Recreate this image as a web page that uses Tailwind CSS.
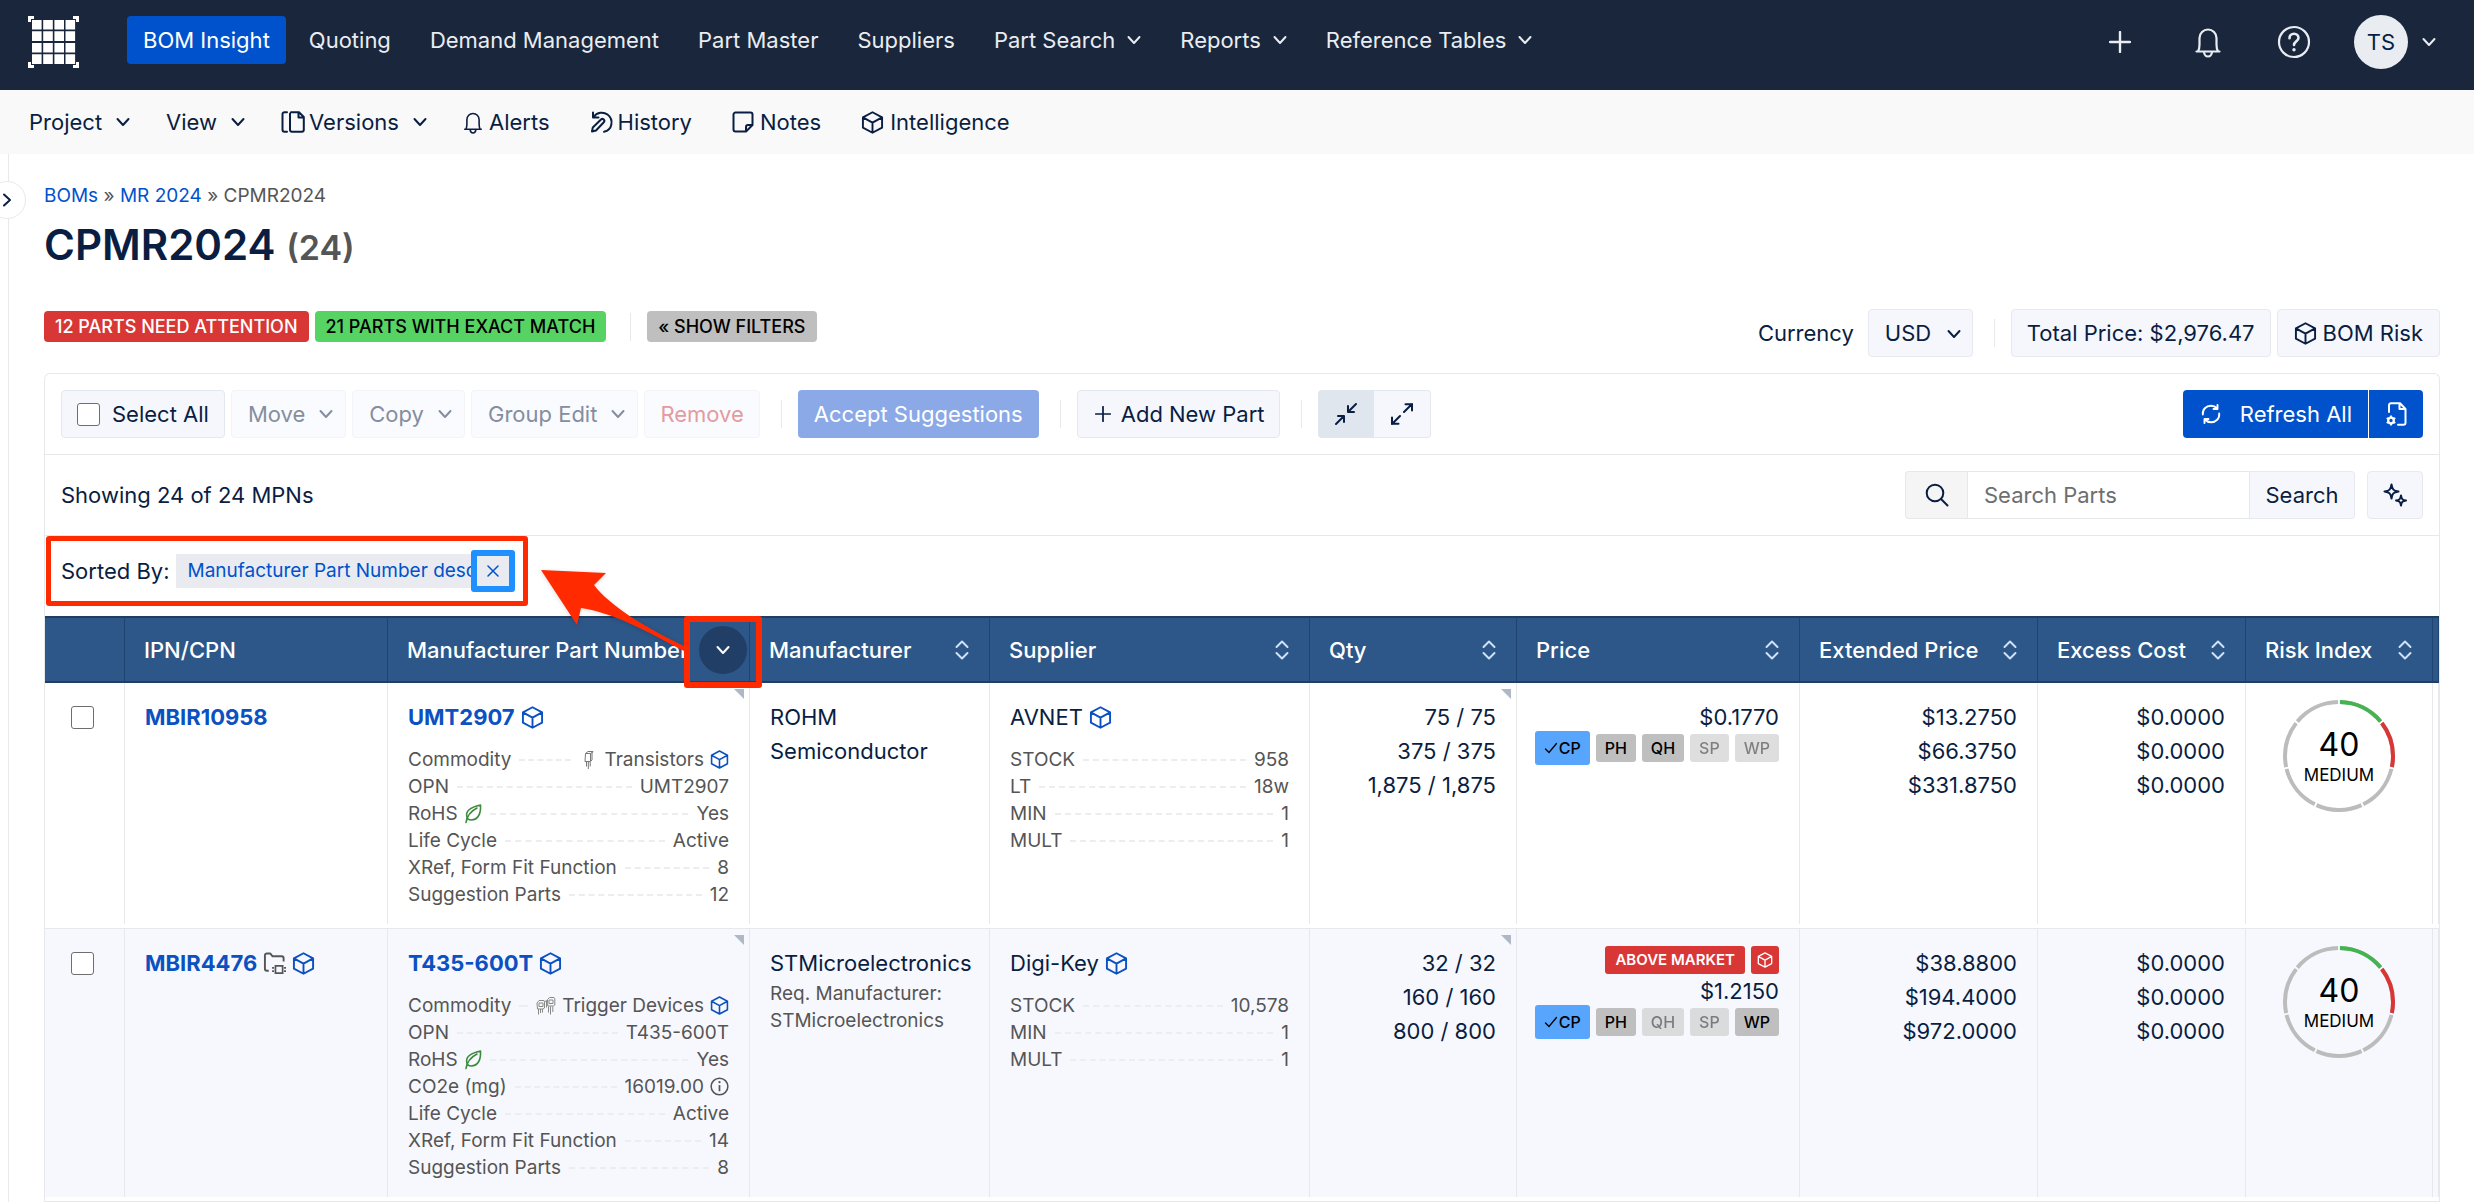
<!DOCTYPE html>
<html lang="en">
<head>
  <meta charset="UTF-8" />
  <meta name="viewport" content="width=device-width, initial-scale=1.0"/>
  <title>CPMR2024 - BOM Insight</title>
  <script src="https://cdn.jsdelivr.net/npm/@tailwindcss/browser@4"></script>
</head>
<body class="h-screen overflow-hidden flex flex-col bg-white text-[#091e42] font-['Inter',sans-serif] text-[22px] leading-[34px]">

  <!-- Icon sprite -->
  <svg class="hidden" xmlns="http://www.w3.org/2000/svg">
    <symbol id="i-chevron" viewBox="0 0 14 14"><path d="M1.5 4 7 10l5.500-6" fill="none" stroke="currentColor" stroke-width="2" stroke-linecap="round" stroke-linejoin="round"/></symbol>
    <symbol id="i-sort" viewBox="0 0 14 20"><path d="M1.500 7 7 1.500 12.500 7M1.500 13 7 18.500 12.500 13" fill="none" stroke="currentColor" stroke-width="2" stroke-linecap="round" stroke-linejoin="round"/></symbol>
    <symbol id="i-cube" viewBox="0 0 24 24"><path d="M12 1.300 22 6.600v10.800L12 22.700 2 17.400V6.600zM2 6.600l10 5.600 10-5.600M12 12.200v10.500" fill="none" stroke="currentColor" stroke-width="2" stroke-linejoin="round"/></symbol>
    <symbol id="i-bell" viewBox="0 0 26 32"><path d="M3 25.500c1-1.500 1.500-3.500 1.500-7V12a8.500 8.500 0 0 1 17 0v6.500c0 3.500.5 5.500 1.500 7zM1.500 25.500h23M9 26c.3 2.800 1.800 4.500 4 4.500s3.700-1.700 4-4.500" fill="none" stroke="currentColor" stroke-width="2.200" stroke-linecap="round" stroke-linejoin="round"/></symbol>
    <symbol id="i-help" viewBox="0 0 34 34"><circle cx="17" cy="17" r="15" fill="none" stroke="currentColor" stroke-width="2.200"/><path d="M12.500 13.200c0-2.600 1.900-4.400 4.500-4.400s4.500 1.700 4.500 4.200c0 3.200-4.500 3.500-4.500 7" fill="none" stroke="currentColor" stroke-width="2.600" stroke-linecap="round"/><circle cx="17" cy="24.700" r="1.700" fill="currentColor"/></symbol>
    <symbol id="i-plus" viewBox="0 0 22 22"><path d="M11 1v20M1 11h20" fill="none" stroke="currentColor" stroke-width="2.400" stroke-linecap="round"/></symbol>
    <symbol id="i-versions" viewBox="0 0 24 22"><path d="M6 1.200H3.500a2 2 0 0 0-2 2v15.600a2 2 0 0 0 2 2H6M10 1.200h8L22.800 6v12.800a2 2 0 0 1-2 2H11a2 2 0 0 1-2-2V2.500M17.500 1.500V6.500h5" fill="none" stroke="currentColor" stroke-width="2" stroke-linecap="round" stroke-linejoin="round"/></symbol>
    <symbol id="i-history" viewBox="0 0 24 22"><path d="M3 1.500v5h5.500M3.500 6C7 1 13.500.5 17.500 3.500 24 8.500 22.500 19 14 20.700M2 20.500l.8-4L11 8.500c1.800-1.700 4.500.8 2.800 2.800L6 19.500z" fill="none" stroke="currentColor" stroke-width="2" stroke-linecap="round" stroke-linejoin="round"/></symbol>
    <symbol id="i-note" viewBox="0 0 22 22"><path d="M3.500 1.500h15a2 2 0 0 1 2 2V14l-6.500 6.500H3.500a2 2 0 0 1-2-2v-15a2 2 0 0 1 2-2zM20 14h-4a2 2 0 0 0-2 2v4.500" fill="none" stroke="currentColor" stroke-width="2" stroke-linejoin="round"/></symbol>
    <symbol id="i-leaf" viewBox="0 0 18 20"><path d="M2 18.500C3 12 7 7 13 4M3 13.500C1 7 6 3.500 16.500 1c.5 8-2 15-9.500 15-2 0-3.300-.8-4-2.500z" fill="none" stroke="currentColor" stroke-width="1.600" stroke-linecap="round" stroke-linejoin="round"/></symbol>
    <symbol id="i-transistor" viewBox="0 0 20 20"><path d="M6.500 3.500 9 1.500h5l-1 1.500v7l-1.500 1.500H6zM6.500 3.500h5l1.500-1M11.500 3.500v7.500M7.500 12v4.500M9.300 12v7M11.200 12v4.500" fill="none" stroke="#777" stroke-width="1"/></symbol>
    <symbol id="i-trigger" viewBox="0 0 20 20"><path d="M1 7 3 4.500h5l.5 1.500v6L7 13H1.500zM3 7h4v3.500H3zM11.500 3.500 13.500 1.500H18l.8 1.300v6.200l-1.500 1h-5.500zM13 4h4v3.500h-4zM2.500 13v5.500M4.500 13v4M6.500 13v3.500M12.500 10.500v6M14.500 10.500v8M16.800 10.500v5.500M9 5.500l1.500-1v7" fill="none" stroke="#888" stroke-width="1"/></symbol>
    <symbol id="i-search" viewBox="0 0 24 24"><circle cx="10" cy="10" r="8.300" fill="none" stroke="currentColor" stroke-width="2"/><path d="m16 16 6.500 6.500" stroke="currentColor" stroke-width="2" stroke-linecap="round"/></symbol>
    <symbol id="i-refresh" viewBox="0 0 20 20"><path d="M1.800 10.500C1.300 5.500 5 1.800 10 1.800c2.500 0 4.500 1 6 2.700M18.200 9.500c.5 5-3.200 8.700-8.200 8.700-2.500 0-4.500-1-6-2.700M16.500 1v4h-4M3.500 19v-4h4" fill="none" stroke="currentColor" stroke-width="1.900" stroke-linecap="round" stroke-linejoin="round"/></symbol>
    <symbol id="i-filegear" viewBox="0 0 22 24"><path d="M4 10V3.200a2 2 0 0 1 2-2h9L20.500 7v13.800a2 2 0 0 1-2 2H13M14.500 1.500V7h5.500" fill="none" stroke="currentColor" stroke-width="2" stroke-linecap="round" stroke-linejoin="round"/><circle cx="6" cy="18.500" r="2.800" fill="none" stroke="currentColor" stroke-width="2.200"/><path d="M6 13.500v2M6 21.500v2M1.700 16l1.700 1M8.600 20l1.700 1M1.700 21l1.700-1M8.600 17l1.700-1" stroke="currentColor" stroke-width="1.800"/></symbol>
    <symbol id="i-sparkle" viewBox="0 0 24 24"><path d="M8.500 1.500c.7 5 2 6.300 7 7-5 .7-6.300 2-7 7-.7-5-2-6.300-7-7 5-.7 6.300-2 7-7z" fill="none" stroke="currentColor" stroke-width="2" stroke-linejoin="round"/><path d="M18 12.500c.5 3.600 1.400 4.500 5 5-3.600.5-4.500 1.400-5 5-.5-3.600-1.400-4.500-5-5 3.600-.5 4.500-1.400 5-5z" fill="none" stroke="currentColor" stroke-width="2" stroke-linejoin="round"/></symbol>
    <symbol id="i-collapse" viewBox="0 0 22 22"><path d="m21 1-7.500 7.500M13 3v6h6M1 21l7.500-7.500M3 13h6v6" fill="none" stroke="currentColor" stroke-width="2" stroke-linecap="round" stroke-linejoin="round"/></symbol>
    <symbol id="i-expand" viewBox="0 0 22 22"><path d="M13 9 21 1M14.500 1.200H21V7.500M9 13l-8 8M7.500 20.800H1V14.500" fill="none" stroke="currentColor" stroke-width="2" stroke-linecap="round" stroke-linejoin="round"/></symbol>
    <symbol id="i-folderchip" viewBox="0 0 24 24"><path d="M6 19.500H4a2 2 0 0 1-2-2v-14a2 2 0 0 1 2-2h3.500l2.500 3h9.500a2 2 0 0 1 2 2V10" fill="none" stroke="currentColor" stroke-width="2" stroke-linejoin="round"/><path d="M13 14.500h7.500V22H13z" fill="none" stroke="currentColor" stroke-width="1.800"/><path d="M9.500 16.500h2M9.500 20h2M22 16.500h2M22 20h2" stroke="currentColor" stroke-width="1.800"/></symbol>
    <symbol id="i-info" viewBox="0 0 20 20"><circle cx="10" cy="10" r="8.800" fill="none" stroke="currentColor" stroke-width="1.600"/><path d="M10 8.500V15" stroke="currentColor" stroke-width="1.800"/><circle cx="10" cy="5.500" r="1.200" fill="currentColor"/></symbol>
    <symbol id="i-check" viewBox="0 0 14 12"><path d="m1.500 7 3.500 3.500L12.500 1.500" fill="none" stroke="currentColor" stroke-width="1.300" stroke-linecap="round"/></symbol>
    <symbol id="i-x" viewBox="0 0 12 12"><path d="m1 1 10 10M11 1 1 11" stroke="currentColor" stroke-width="1.500" stroke-linecap="round"/></symbol>
    <symbol id="i-ring" viewBox="0 0 112 112">
      <g fill="none" stroke-width="4" transform="rotate(-89 56 56)">
        <circle cx="56" cy="56" r="54" pathLength="700" stroke="#bcbcbc" stroke-dasharray="96 4"/>
        <circle cx="56" cy="56" r="54" pathLength="700" stroke="#43b450" stroke-dasharray="96 604"/>
        <circle cx="56" cy="56" r="54" pathLength="700" stroke="#d93636" stroke-dasharray="96 604" stroke-dashoffset="-100"/>
      </g>
    </symbol>
  </svg>

  <!-- Top bar -->
  <header class="h-[90px] shrink-0 flex items-start bg-[#19263c] text-[#e9edf2] pl-7 pr-[38px]">
    <a href="#" aria-label="Home" class="pt-4 mr-12">
      <svg class="w-[51px] h-[52px]" viewBox="0 0 51 52" fill="#fff">
        <path d="M0 0h6v3H3v3H0zM45 0h6v6h-3V3h-3zM0 46h3v3h3v3H0zM48 46h3v6h-6v-3h3z"/>
        <path d="M4 4h9.600v9.600H4zM15.200 4h9.600v9.600h-9.600zM26.400 4H36v9.600h-9.600zM37.500 4h9.600v9.600h-9.600zM4 15.300h9.600v9.600H4zM15.200 15.300h9.600v9.600h-9.600zM26.400 15.300H36v9.600h-9.600zM37.500 15.300h9.600v9.600h-9.600zM4 26.900h9.600v9.600H4zM15.200 26.900h9.600v9.600h-9.600zM26.400 26.900H36v9.600h-9.600zM37.500 26.900h9.600v9.600h-9.600zM4 38.300h9.600v9.600H4zM15.200 38.300h9.600v9.600h-9.600zM26.400 38.300H36v9.600h-9.600zM37.500 38.300h9.600v9.600h-9.600z"/>
      </svg>
    </a>
    <nav class="flex items-center gap-[7px] pt-4">
      <a href="#" class="h-12 px-4 flex items-center rounded-sm bg-[#0052cc] text-white">BOM Insight</a>
      <a href="#" class="h-12 px-4 flex items-center">Quoting</a>
      <a href="#" class="h-12 px-4 flex items-center">Demand Management</a>
      <a href="#" class="h-12 px-4 flex items-center">Part Master</a>
      <a href="#" class="h-12 px-4 flex items-center">Suppliers</a>
      <button class="h-12 px-4 flex items-center gap-3">Part Search <svg class="size-3.5"><use href="#i-chevron"/></svg></button>
      <button class="h-12 px-4 flex items-center gap-3">Reports <svg class="size-3.5"><use href="#i-chevron"/></svg></button>
      <button class="h-12 px-4 flex items-center gap-3">Reference Tables <svg class="size-3.5"><use href="#i-chevron"/></svg></button>
    </nav>
    <div class="ml-auto flex items-center pt-[15px]">
      <button aria-label="Add" class="mr-16"><svg class="size-[22px]"><use href="#i-plus"/></svg></button>
      <button aria-label="Notifications" class="mr-14"><svg class="w-[26px] h-8"><use href="#i-bell"/></svg></button>
      <button aria-label="Help" class="mr-[43px]"><svg class="size-[34px]"><use href="#i-help"/></svg></button>
      <button class="flex items-center gap-3.5">
        <span class="size-[54px] rounded-full bg-[#e9edf2] text-[#091e42] flex items-center justify-center">TS</span>
        <svg class="size-3.5"><use href="#i-chevron"/></svg>
      </button>
    </div>
  </header>

  <!-- Project menu -->
  <nav class="h-16 shrink-0 flex items-center gap-9 bg-[#f9f9f9] pl-[29px]">
    <button class="flex items-center gap-3.5">Project <svg class="size-3.5"><use href="#i-chevron"/></svg></button>
    <button class="flex items-center gap-3.5">View <svg class="size-3.5"><use href="#i-chevron"/></svg></button>
    <button class="flex items-center gap-3.5"><span class="flex items-center gap-1"><svg class="w-6 h-[22px]"><use href="#i-versions"/></svg>Versions</span> <svg class="size-3.5"><use href="#i-chevron"/></svg></button>
    <a href="#" class="flex items-center gap-1.5"><svg class="w-5 h-[23px]"><use href="#i-bell"/></svg>Alerts</a>
    <a href="#" class="ml-1 flex items-center gap-1"><svg class="w-6 h-[22px]"><use href="#i-history"/></svg>History</a>
    <a href="#" class="ml-1 flex items-center gap-1.5"><svg class="size-[22px]"><use href="#i-note"/></svg>Notes</a>
    <a href="#" class="ml-1 flex items-center gap-1.5"><svg class="size-[23px]"><use href="#i-cube"/></svg>Intelligence</a>
  </nav>

  <div class="flex-1 min-h-0 flex">
    <aside class="relative w-[9px] shrink-0 border-r border-[#e8e9eb]">
      <button aria-label="Expand sidebar" class="absolute top-[27px] -left-3 size-[38px] rounded-full border border-[#e8e9eb] bg-white flex items-center justify-center">
        <svg class="size-3.5 -rotate-90"><use href="#i-chevron"/></svg>
      </button>
    </aside>

    <main class="flex-1 min-w-0 pt-7 pl-[35px] pr-[34px]">
      <p class="text-[19px] leading-7 text-[#555]"><a href="#" class="text-[#0052cc]">BOMs</a> » <a href="#" class="text-[#0052cc]">MR 2024</a> » CPMR2024</p>
      <h1 class="mt-[7px] h-14 text-[42px] leading-14 font-semibold">CPMR2024 <small class="text-[34px] text-[#555]">(24)</small></h1>

      <div class="mt-9 flex items-start">
        <div class="mt-0.5 flex items-center gap-1.5 text-lg font-medium">
          <a href="#" class="h-[31px] px-[11px] flex items-center rounded-sm bg-[#d93636] text-white">12 PARTS NEED ATTENTION</a>
          <a href="#" class="h-[31px] px-[11px] flex items-center rounded-sm bg-[#57d364] text-black">21 PARTS WITH EXACT MATCH</a>
          <span class="ml-[18px] mr-2.5 h-7 w-px bg-[#e8e9eb]"></span>
          <button class="h-[31px] px-[11px] flex items-center rounded-sm bg-[#bfbfbf] text-black">« SHOW FILTERS</button>
        </div>
        <div class="ml-auto flex items-center">
          <label for="currency" class="mr-3.5">Currency</label>
          <div class="relative">
            <select id="currency" class="h-12 w-[105px] pl-4 appearance-none rounded-sm border border-[#e6e9f0] bg-[#f6f7fd]"><option>USD</option></select>
            <svg class="size-3.5 absolute right-3 top-[18px] pointer-events-none"><use href="#i-chevron"/></svg>
          </div>
          <span class="ml-[21px] mr-4 h-7 w-px bg-[#e8e9eb]"></span>
          <button class="mr-1.5 h-12 px-[15px] rounded-sm border border-[#e6e9f0] bg-[#f6f7fd]">Total Price: $2,976.47</button>
          <button class="h-12 px-4 flex items-center gap-1.5 rounded-sm border border-[#e6e9f0] bg-[#f6f7fd]"><svg class="size-[23px]"><use href="#i-cube"/></svg>BOM Risk</button>
        </div>
      </div>

      <section class="mt-4 rounded-t-md border border-b-0 border-[#e6e8ea]">
        <!-- Toolbar -->
        <div class="flex items-center gap-1.5 p-4 border-b border-[#e6e8ea]">
          <label class="h-12 px-[15px] flex items-center gap-3 rounded-sm border border-[#e4e8ef] bg-[#f6f7fd]"><input type="checkbox" class="size-[23px] appearance-none rounded-[3px] border border-[#6e6e6e] bg-white" />Select All</label>
          <button disabled class="h-12 pl-4 pr-3 flex items-center gap-3.5 rounded-sm border border-[#f2f4f8] bg-[#fafbfe] text-[#848e9f]">Move <svg class="size-3.5"><use href="#i-chevron"/></svg></button>
          <button disabled class="h-12 pl-4 pr-3 flex items-center gap-3.5 rounded-sm border border-[#f2f4f8] bg-[#fafbfe] text-[#848e9f]">Copy <svg class="size-3.5"><use href="#i-chevron"/></svg></button>
          <button disabled class="h-12 pl-4 pr-3 flex items-center gap-3.5 rounded-sm border border-[#f2f4f8] bg-[#fafbfe] text-[#848e9f]">Group Edit <svg class="size-3.5"><use href="#i-chevron"/></svg></button>
          <button disabled class="h-12 px-[15px] rounded-sm border border-[#f2f4f8] bg-[#fafbfe] text-[#e29c9f]">Remove</button>
          <span class="ml-[15px] mr-2.5 h-7 w-px bg-[#e8e9eb]"></span>
          <button disabled class="h-12 px-4 rounded-sm bg-[#8ba9e6] text-white">Accept Suggestions</button>
          <span class="ml-[15px] mr-2.5 h-7 w-px bg-[#e8e9eb]"></span>
          <button class="h-12 px-[15px] flex items-center gap-2 rounded-sm border border-[#e4e8ef] bg-[#f6f7fd]"><svg class="mx-0.5 size-4"><use href="#i-plus"/></svg>Add New Part</button>
          <span class="ml-[15px] mr-2.5 h-7 w-px bg-[#e8e9eb]"></span>
          <div class="flex">
            <button aria-label="Collapse rows" class="h-12 w-14 flex items-center justify-center rounded-l-sm bg-[#dfe6ee]"><svg class="size-[22px]"><use href="#i-collapse"/></svg></button>
            <button aria-label="Expand rows" class="h-12 w-[57px] flex items-center justify-center rounded-r-sm border border-l-0 border-[#e4e8ef] bg-[#f6f7fd]"><svg class="size-[22px]"><use href="#i-expand"/></svg></button>
          </div>
          <div class="ml-auto flex text-white">
            <button class="h-12 pl-[18px] pr-4 flex items-center gap-[19px] rounded-l-sm bg-[#0052cc]"><svg class="size-5"><use href="#i-refresh"/></svg>Refresh All</button>
            <button aria-label="Refresh settings" class="ml-px h-12 w-[54px] flex items-center justify-center rounded-r-sm bg-[#0052cc]"><svg class="w-[22px] h-6"><use href="#i-filegear"/></svg></button>
          </div>
        </div>

        <!-- Search -->
        <div class="flex items-center p-4 border-b border-[#e6e8ea]">
          <span>Showing 24 of 24 MPNs</span>
          <label for="search" aria-label="Search Parts" class="ml-auto h-12 w-[62px] flex items-center justify-center rounded-l-sm border border-r-0 border-[#e6e8ea] bg-[#f5f5f5]"><svg class="size-6"><use href="#i-search"/></svg></label>
          <input id="search" type="text" placeholder="Search Parts" class="h-12 w-[283px] px-4 border border-[#e6e8ea] placeholder:text-[#6e6e6e]" />
          <button class="h-12 w-[105px] rounded-r-sm border border-l-0 border-[#e6e9f0] bg-[#f6f7fd]">Search</button>
          <button aria-label="Suggest" class="ml-3 h-12 w-14 flex items-center justify-center rounded-sm border border-[#e6e9f0] bg-[#f6f7fd]"><svg class="size-6"><use href="#i-sparkle"/></svg></button>
        </div>

        <!-- Active sort -->
        <div class="relative flex items-center gap-1.5 h-20 px-4 pb-2.5">
          <span>Sorted By:</span>
          <div class="flex items-center h-[34px] pl-3 bg-[#e9ebf0] text-[19px] text-[#0052cc]">
            <span>Manufacturer Part Number desc</span>
            <button aria-label="Clear sort" class="relative h-[34px] w-8 flex items-center justify-center bg-[#e9ebf0]">
              <svg class="size-3"><use href="#i-x"/></svg>
              <span class="absolute -inset-x-1.5 -inset-y-1 rounded-[3px] border-6 border-[#1e90ff]"></span>
            </button>
          </div>
          <span class="absolute left-px top-0 w-[482px] h-[70px] rounded-[3px] border-[5px] border-[#ff2a00]"></span>
          <svg class="absolute left-[490px] top-6 z-10 w-[160px] h-[100px] drop-shadow-sm" viewBox="535 561 160 100"><path d="M541 571 606 574 594 586C610 607 646 629 684 647L684 652C650 634 612 613 581 609L577 626Z" fill="#ff2a00"/></svg>
        </div>

        <table class="w-full table-fixed border-separate border-spacing-0 text-left">
          <colgroup>
            <col class="w-[80px]"><col class="w-[263px]"><col class="w-[362px]"><col class="w-[240px]"><col class="w-[320px]"><col class="w-[207px]"><col class="w-[283px]"><col class="w-[238px]"><col class="w-[208px]"><col class="w-[187px]"><col class="w-[6px]">
          </colgroup>
          <thead class="bg-[#2c5788] text-white">
            <tr class="h-[67px] *:p-0 *:font-medium *:border-y-2 *:border-r *:border-y-[#213d61] *:border-r-[#1f4470]">
              <th></th>
              <th><span class="px-[19px]">IPN/CPN</span></th>
              <th>
                <div class="pl-[19px] pr-0.5 flex items-center justify-between whitespace-nowrap">
                  Manufacturer Part Number
                  <button aria-label="Sorted descending" class="relative size-12 rounded-full bg-[#213f66] flex items-center justify-center">
                    <svg class="size-3.5"><use href="#i-chevron"/></svg>
                    <span class="absolute -inset-x-[15px] -top-2.5 -bottom-3.5 z-10 rounded-[3px] border-6 border-[#ff2a00]"></span>
                  </button>
                </div>
              </th>
              <th><div class="pl-[19px] pr-5 flex items-center justify-between">Manufacturer <svg class="w-3.5 h-5 text-[#cfe2fb]"><use href="#i-sort"/></svg></div></th>
              <th><div class="pl-[19px] pr-5 flex items-center justify-between">Supplier <svg class="w-3.5 h-5 text-[#cfe2fb]"><use href="#i-sort"/></svg></div></th>
              <th><div class="pl-[19px] pr-5 flex items-center justify-between">Qty <svg class="w-3.5 h-5 text-[#cfe2fb]"><use href="#i-sort"/></svg></div></th>
              <th><div class="pl-[19px] pr-5 flex items-center justify-between">Price <svg class="w-3.5 h-5 text-[#cfe2fb]"><use href="#i-sort"/></svg></div></th>
              <th><div class="pl-[19px] pr-5 flex items-center justify-between">Extended Price <svg class="w-3.5 h-5 text-[#cfe2fb]"><use href="#i-sort"/></svg></div></th>
              <th><div class="pl-[19px] pr-5 flex items-center justify-between">Excess Cost <svg class="w-3.5 h-5 text-[#cfe2fb]"><use href="#i-sort"/></svg></div></th>
              <th><div class="pl-[19px] pr-5 flex items-center justify-between">Risk Index <svg class="w-3.5 h-5 text-[#cfe2fb]"><use href="#i-sort"/></svg></div></th>
              <th></th>
            </tr>
          </thead>
          <tbody>
            <tr class="h-[241px] align-top *:px-5 *:pt-[17px] *:border-r *:border-[#e6e8ec]">
              <td><input type="checkbox" aria-label="Select MBIR10958" class="block ml-1.5 mt-1.5 size-[23px] appearance-none rounded-[3px] border border-[#6e6e6e] bg-white" /></td>
              <td><a href="#" class="font-bold text-[#0b51c1]">MBIR10958</a></td>
              <td class="relative">
                <svg class="absolute right-[5px] top-1.5 size-2.5 fill-[#adb9c6]" viewBox="0 0 10 10"><path d="M0 0h10v10z"/></svg>
                <a href="#" class="flex items-center gap-1.5 font-bold text-[#0b51c1]">UMT2907 <svg class="size-[23px]"><use href="#i-cube"/></svg></a>
                <dl class="mt-3 text-[19px] leading-[27px] text-[#555]">
                  <div class="flex items-center gap-2"><dt>Commodity</dt><span class="flex-1 border-t-2 border-dashed border-[#ebedef]"></span><dd class="flex items-center gap-1.5"><svg class="size-5"><use href="#i-transistor"/></svg>Transistors<svg class="size-[19px] text-[#0b51c1]"><use href="#i-cube"/></svg></dd></div>
                  <div class="flex items-center gap-2"><dt>OPN</dt><span class="flex-1 border-t-2 border-dashed border-[#ebedef]"></span><dd>UMT2907</dd></div>
                  <div class="flex items-center gap-2"><dt class="flex items-center gap-1.5">RoHS <svg class="w-[18px] h-5 text-[#3c8a3f]"><use href="#i-leaf"/></svg></dt><span class="flex-1 border-t-2 border-dashed border-[#ebedef]"></span><dd>Yes</dd></div>
                  <div class="flex items-center gap-2"><dt>Life Cycle</dt><span class="flex-1 border-t-2 border-dashed border-[#ebedef]"></span><dd>Active</dd></div>
                  <div class="flex items-center gap-2"><dt>XRef, Form Fit Function</dt><span class="flex-1 border-t-2 border-dashed border-[#ebedef]"></span><dd>8</dd></div>
                  <div class="flex items-center gap-2"><dt>Suggestion Parts</dt><span class="flex-1 border-t-2 border-dashed border-[#ebedef]"></span><dd>12</dd></div>
                </dl>
              </td>
              <td>ROHM Semiconductor</td>
              <td>
                <div class="flex items-center gap-1.5">AVNET <svg class="size-[23px] text-[#0b51c1]"><use href="#i-cube"/></svg></div>
                <dl class="mt-3 text-[19px] leading-[27px] text-[#555]">
                  <div class="flex items-center gap-2"><dt>STOCK</dt><span class="flex-1 border-t-2 border-dashed border-[#ebedef]"></span><dd>958</dd></div>
                  <div class="flex items-center gap-2"><dt>LT</dt><span class="flex-1 border-t-2 border-dashed border-[#ebedef]"></span><dd>18w</dd></div>
                  <div class="flex items-center gap-2"><dt>MIN</dt><span class="flex-1 border-t-2 border-dashed border-[#ebedef]"></span><dd>1</dd></div>
                  <div class="flex items-center gap-2"><dt>MULT</dt><span class="flex-1 border-t-2 border-dashed border-[#ebedef]"></span><dd>1</dd></div>
                </dl>
              </td>
              <td class="relative text-right">
                <svg class="absolute right-[5px] top-1.5 size-2.5 fill-[#adb9c6]" viewBox="0 0 10 10"><path d="M0 0h10v10z"/></svg>
                75 / 75<br>375 / 375<br>1,875 / 1,875
              </td>
              <td class="text-right leading-7">
                <div class="pt-[3px]">$0.1770</div>
                <div class="flex items-center justify-end gap-1.5 text-base font-medium text-black">
                  <span class="h-[34px] px-[9px] flex items-center gap-px rounded-[3px] bg-[#58a5fd]"><svg class="w-3.5 h-3"><use href="#i-check"/></svg>CP</span>
                  <span class="h-7 px-[9px] flex items-center rounded-[3px] bg-[#bfbfbf]">PH</span>
                  <span class="h-7 px-[9px] flex items-center rounded-[3px] bg-[#bfbfbf]">QH</span>
                  <span class="h-7 px-[9px] flex items-center rounded-[3px] bg-[#bfbfbf] opacity-50">SP</span>
                  <span class="h-7 px-[9px] flex items-center rounded-[3px] bg-[#bfbfbf] opacity-50">WP</span>
                </div>
              </td>
              <td class="text-right">$13.2750<br>$66.3750<br>$331.8750</td>
              <td class="text-right">$0.0000<br>$0.0000<br>$0.0000</td>
              <td>
                <div class="relative mx-auto size-28 pt-[27px] text-center text-black">
                  <svg class="absolute inset-0 size-28"><use href="#i-ring"/></svg>
                  <div class="text-[32px] leading-9">40</div>
                  <div class="text-[17px] leading-6">MEDIUM</div>
                </div>
              </td>
              <td></td>
            </tr>
            <tr><td colspan="11" class="h-[5px] p-0 border-b border-[#e6e8ec]"></td></tr>
            <tr class="h-[268px] align-top bg-[#f7f8fd] *:px-5 *:pt-[17px] *:border-r *:border-[#e6e8ec]">
              <td><input type="checkbox" aria-label="Select MBIR4476" class="block ml-1.5 mt-1.5 size-[23px] appearance-none rounded-[3px] border border-[#6e6e6e] bg-white" /></td>
              <td><a href="#" class="flex items-center gap-1.5 font-bold text-[#0b51c1]">MBIR4476 <svg class="size-[23px] text-[#555]"><use href="#i-folderchip"/></svg><svg class="size-[23px]"><use href="#i-cube"/></svg></a></td>
              <td class="relative">
                <svg class="absolute right-[5px] top-1.5 size-2.5 fill-[#adb9c6]" viewBox="0 0 10 10"><path d="M0 0h10v10z"/></svg>
                <a href="#" class="flex items-center gap-1.5 font-bold text-[#0b51c1]">T435-600T <svg class="size-[23px]"><use href="#i-cube"/></svg></a>
                <dl class="mt-3 text-[19px] leading-[27px] text-[#555]">
                  <div class="flex items-center gap-2"><dt>Commodity</dt><span class="flex-1 border-t-2 border-dashed border-[#ebedef]"></span><dd class="flex items-center gap-1.5"><svg class="size-5"><use href="#i-trigger"/></svg>Trigger Devices<svg class="size-[19px] text-[#0b51c1]"><use href="#i-cube"/></svg></dd></div>
                  <div class="flex items-center gap-2"><dt>OPN</dt><span class="flex-1 border-t-2 border-dashed border-[#ebedef]"></span><dd>T435-600T</dd></div>
                  <div class="flex items-center gap-2"><dt class="flex items-center gap-1.5">RoHS <svg class="w-[18px] h-5 text-[#3c8a3f]"><use href="#i-leaf"/></svg></dt><span class="flex-1 border-t-2 border-dashed border-[#ebedef]"></span><dd>Yes</dd></div>
                  <div class="flex items-center gap-2"><dt>CO2e (mg)</dt><span class="flex-1 border-t-2 border-dashed border-[#ebedef]"></span><dd class="flex items-center gap-1.5">16019.00<svg class="size-[19px]"><use href="#i-info"/></svg></dd></div>
                  <div class="flex items-center gap-2"><dt>Life Cycle</dt><span class="flex-1 border-t-2 border-dashed border-[#ebedef]"></span><dd>Active</dd></div>
                  <div class="flex items-center gap-2"><dt>XRef, Form Fit Function</dt><span class="flex-1 border-t-2 border-dashed border-[#ebedef]"></span><dd>14</dd></div>
                  <div class="flex items-center gap-2"><dt>Suggestion Parts</dt><span class="flex-1 border-t-2 border-dashed border-[#ebedef]"></span><dd>8</dd></div>
                </dl>
              </td>
              <td>STMicroelectronics
                <p class="text-[19px] leading-[27px] text-[#555]">Req. Manufacturer: STMicroelectronics</p>
              </td>
              <td>
                <div class="flex items-center gap-1.5">Digi-Key <svg class="size-[23px] text-[#0b51c1]"><use href="#i-cube"/></svg></div>
                <dl class="mt-3 text-[19px] leading-[27px] text-[#555]">
                  <div class="flex items-center gap-2"><dt>STOCK</dt><span class="flex-1 border-t-2 border-dashed border-[#ebedef]"></span><dd>10,578</dd></div>
                  <div class="flex items-center gap-2"><dt>MIN</dt><span class="flex-1 border-t-2 border-dashed border-[#ebedef]"></span><dd>1</dd></div>
                  <div class="flex items-center gap-2"><dt>MULT</dt><span class="flex-1 border-t-2 border-dashed border-[#ebedef]"></span><dd>1</dd></div>
                </dl>
              </td>
              <td class="relative text-right">
                <svg class="absolute right-[5px] top-1.5 size-2.5 fill-[#adb9c6]" viewBox="0 0 10 10"><path d="M0 0h10v10z"/></svg>
                32 / 32<br>160 / 160<br>800 / 800
              </td>
              <td class="text-right leading-7">
                <div class="flex items-center justify-end gap-1.5 text-[15px] font-semibold text-white">
                  <span class="h-7 px-2.5 flex items-center rounded-[3px] bg-[#d93636]">ABOVE MARKET</span>
                  <span class="h-7 w-7 flex items-center justify-center rounded-[3px] bg-[#d93636]"><svg class="size-4"><use href="#i-cube"/></svg></span>
                </div>
                <div class="pt-[3px]">$1.2150</div>
                <div class="flex items-center justify-end gap-1.5 text-base font-medium text-black">
                  <span class="h-[34px] px-[9px] flex items-center gap-px rounded-[3px] bg-[#58a5fd]"><svg class="w-3.5 h-3"><use href="#i-check"/></svg>CP</span>
                  <span class="h-7 px-[9px] flex items-center rounded-[3px] bg-[#bfbfbf]">PH</span>
                  <span class="h-7 px-[9px] flex items-center rounded-[3px] bg-[#bfbfbf] opacity-50">QH</span>
                  <span class="h-7 px-[9px] flex items-center rounded-[3px] bg-[#bfbfbf] opacity-50">SP</span>
                  <span class="h-7 px-[9px] flex items-center rounded-[3px] bg-[#bfbfbf]">WP</span>
                </div>
              </td>
              <td class="text-right">$38.8800<br>$194.4000<br>$972.0000</td>
              <td class="text-right">$0.0000<br>$0.0000<br>$0.0000</td>
              <td>
                <div class="relative mx-auto size-28 pt-[27px] text-center text-black">
                  <svg class="absolute inset-0 size-28"><use href="#i-ring"/></svg>
                  <div class="text-[32px] leading-9">40</div>
                  <div class="text-[17px] leading-6">MEDIUM</div>
                </div>
              </td>
              <td></td>
            </tr>
            <tr><td colspan="11" class="h-[5px] p-0 border-b border-[#e6e8ec]"></td></tr>
          </tbody>
        </table>
      </section>
    </main>
  </div>

</body>
</html>
